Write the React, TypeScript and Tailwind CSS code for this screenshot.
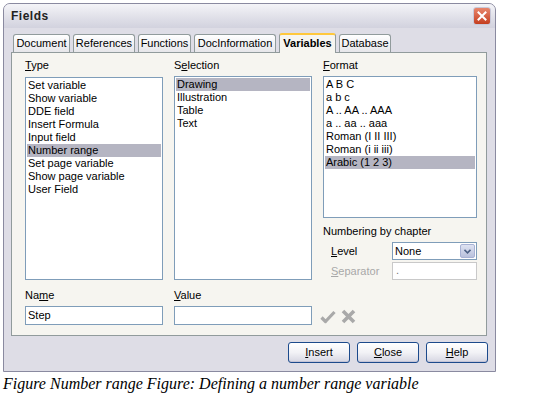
import React from "react";

const typeItems = [
  "Set variable",
  "Show variable",
  "DDE field",
  "Insert Formula",
  "Input field",
  "Number range",
  "Set page variable",
  "Show page variable",
  "User Field",
];

const selectionItems = ["Drawing", "Illustration", "Table", "Text"];

const formatItems = [
  "A B C",
  "a b c",
  "A .. AA .. AAA",
  "a .. aa .. aaa",
  "Roman (I II III)",
  "Roman (i ii iii)",
  "Arabic (1 2 3)",
];

const tabs = [
  { label: "Document", w: "w-[57px]" },
  { label: "References", w: "w-[62px]" },
  { label: "Functions", w: "w-[53px]" },
  { label: "DocInformation", w: "w-[82px]" },
  { label: "Variables", w: "w-[57px]", active: true },
  { label: "Database", w: "w-[52px]" },
];

const ListBox = ({
  items,
  selected,
  className,
}: {
  items: string[];
  selected: number;
  className: string;
}) => (
  <div className={`bg-white border border-[#7f9db9] pt-px px-px ${className}`}>
    {items.map((item, i) => (
      <div
        key={item}
        className={`h-[13px] leading-[13px] pl-[1px] whitespace-nowrap ${
          i === selected ? "bg-[#b5b5c2]" : ""
        }`}
      >
        {item}
      </div>
    ))}
  </div>
);

const Mnemonic = ({ text, index }: { text: string; index: number }) => (
  <span>
    {text.slice(0, index)}
    <span className="underline underline-offset-1">{text[index]}</span>
    {text.slice(index + 1)}
  </span>
);

const DialogButton = ({ text, index }: { text: string; index: number }) => (
  <button className="w-[62px] h-[21px] rounded-[3px] border border-[#1c4a8c] bg-gradient-to-b from-white via-[#f2f2f6] to-[#d6d6e2] text-[11px] leading-none text-black shadow-[inset_0_-1px_0_#c4c4d6]">
    <Mnemonic text={text} index={index} />
  </button>
);

export default function App() {
  return (
    <div className="w-[534px] h-[396px] bg-white overflow-hidden font-['Liberation_Sans',Arial,sans-serif] text-[11px] text-black">
      <div className="ml-[3px] mt-[3px] w-[493px] h-[369px] border border-[#8a8aa0] rounded-t-[7px] bg-[#dedde6] flex flex-col">
        {/* title bar */}
        <div className="h-[24px] flex items-center justify-between pl-[7px] pr-[4px] rounded-t-[6px] bg-gradient-to-b from-[#f4f4f8] via-[#e2e2ea] to-[#d2d2de]">
          <span className="text-[12px] font-bold tracking-[0.5px] text-[#222]">Fields</span>
          <div className="w-[18px] h-[18px] rounded-[3px] border border-[#c8c8d8] bg-gradient-to-b from-[#e8866c] to-[#c43c1c] flex items-center justify-center">
            <svg width="10" height="10" viewBox="0 0 10 10">
              <path d="M1.5 1.5 L8.5 8.5 M8.5 1.5 L1.5 8.5" stroke="white" strokeWidth="2" strokeLinecap="square" />
            </svg>
          </div>
        </div>

        {/* tabs */}
        <div className="flex items-end h-[24px] pl-[9px]">
          {tabs.map((t) =>
            t.active ? (
              <div
                key={t.label}
                className={`${t.w} h-[20px] ml-[3px] -mb-px relative z-10 border border-b-0 border-[#919b9c] border-t-[#ffc83c] border-t-2 rounded-t-[3px] bg-[#f6f5f0] font-bold text-center leading-[17px]`}
              >
                {t.label}
              </div>
            ) : (
              <div
                key={t.label}
                className={`${t.w} h-[18px] ml-[3px] first:ml-0 border border-b-0 border-[#919b9c] rounded-t-[3px] bg-gradient-to-b from-white to-[#e6e6ea] text-center leading-[17px]`}
              >
                {t.label}
              </div>
            )
          )}
        </div>

        {/* panel */}
        <div className="ml-[7px] w-[476px] h-[284px] border border-[#919b9c] bg-[#f6f5f0] pl-[13px] pt-[6px]">
          <div className="flex">
            <div className="w-[138px]">
              <div className="h-[13px] leading-[13px] mb-[5px]">
                <Mnemonic text="Type" index={0} />
              </div>
              <ListBox items={typeItems} selected={5} className="h-[203px]" />
            </div>
            <div className="w-[138px] ml-[11px]">
              <div className="h-[13px] leading-[13px] mb-[4px]">
                <Mnemonic text="Selection" index={1} />
              </div>
              <ListBox items={selectionItems} selected={0} className="h-[204px]" />
            </div>
            <div className="w-[154px] ml-[11px]">
              <div className="h-[13px] leading-[13px] mb-[4px]">
                <Mnemonic text="Format" index={0} />
              </div>
              <ListBox items={formatItems} selected={6} className="h-[142px]" />
              <div className="h-[13px] leading-[13px] mt-[7px]">Numbering by chapter</div>
              <div className="flex items-center mt-[4px] h-[18px]">
                <div className="w-[69px] pl-[8px]">
                  <Mnemonic text="Level" index={0} />
                </div>
                <div className="flex-1 h-[18px] bg-white border border-[#7f9db9] flex items-center justify-between pl-[2px] pr-px">
                  <span>None</span>
                  <div className="w-[15px] h-[14px] rounded-[2px] bg-gradient-to-b from-[#dfe3f2] to-[#b9c1dc] border border-[#a8b2d4] flex items-center justify-center">
                    <svg width="7" height="5" viewBox="0 0 7 5">
                      <path d="M0.5 0.8 L3.5 3.8 L6.5 0.8" stroke="#4d6185" strokeWidth="1.6" fill="none" />
                    </svg>
                  </div>
                </div>
              </div>
              <div className="flex items-center mt-[2px] h-[18px]">
                <div className="w-[69px] pl-[8px] text-[#a8a8a8]">
                  <Mnemonic text="Separator" index={0} />
                </div>
                <div className="flex-1 h-[18px] bg-white border border-[#c9c9c9] pl-[3px] leading-[15px] text-[#777]">
                  .
                </div>
              </div>
            </div>
          </div>

          <div className="flex mt-[9px]">
            <div className="w-[138px]">
              <div className="h-[13px] leading-[13px] mb-[4px]">
                <Mnemonic text="Name" index={2} />
              </div>
              <div className="h-[19px] bg-white border border-[#7f9db9] pl-[2px] leading-[17px]">Step</div>
            </div>
            <div className="w-[138px] ml-[11px]">
              <div className="h-[13px] leading-[13px] mb-[4px]">
                <Mnemonic text="Value" index={0} />
              </div>
              <div className="h-[19px] bg-white border border-[#7f9db9]" />
            </div>
            <div className="flex items-end gap-[5px] ml-[8px] pb-[1px]">
              <svg width="16" height="14" viewBox="0 0 16 14">
                <path d="M1.5 7.5 L5.5 11.5 L14.5 2" stroke="#a9a9a9" strokeWidth="3.2" fill="none" strokeLinejoin="round" />
              </svg>
              <svg width="15" height="15" viewBox="0 0 15 15">
                <path d="M2 2 L13 13 M13 2 L2 13" stroke="#a9a9a9" strokeWidth="3.6" />
              </svg>
            </div>
          </div>
        </div>

        {/* buttons */}
        <div className="flex justify-end gap-[7px] pr-[7px] mt-[6px]">
          <DialogButton text="Insert" index={0} />
          <DialogButton text="Close" index={0} />
          <DialogButton text="Help" index={0} />
        </div>
      </div>

      <div className="mt-[3px] pl-[3px] font-['Liberation_Serif','Times_New_Roman',serif] italic text-[16px] leading-[18px]">
        Figure Number range Figure: Defining a number range variable
      </div>
    </div>
  );
}
